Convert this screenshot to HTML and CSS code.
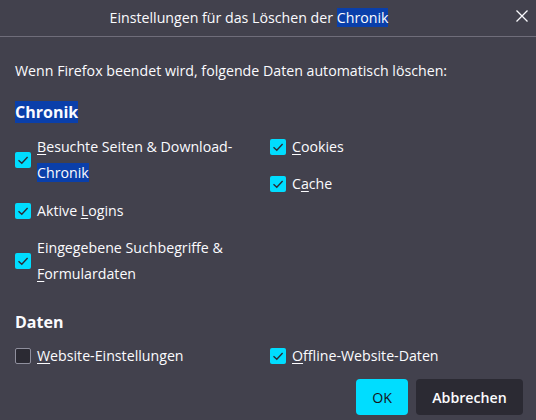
FILE: index.html
```html
<!DOCTYPE html>
<html lang="de">
<head>
<meta charset="utf-8">
<title>Einstellungen für das Löschen der Chronik</title>
<link rel="stylesheet" href="styles.css">
</head>
<body>
<div class="dialog">
  <header class="titlebar">
    <div></div>
    <h1 class="title">Einstellungen für das Löschen der <span class="sel">Chronik</span></h1>
    <div class="close-wrap">
      <svg class="close" width="12" height="12" viewBox="0 0 12 12"><path d="M0.5 0.5 L11.5 11.5 M11.5 0.5 L0.5 11.5" stroke="#fbfbfe" stroke-width="1.3" fill="none"/></svg>
    </div>
  </header>
  <main class="content">
    <p class="desc">Wenn Firefox beendet wird, folgende Daten automatisch löschen:</p>
    <h2 class="section"><span class="sel">Chronik</span></h2>
    <div class="grid">
      <div class="col">
        <label class="item"><span class="box on"><svg width="16" height="16" viewBox="0 0 16 16"><path d="M3.5 8.2 L6.8 11.2 L12.6 5" stroke="#2b2a33" stroke-width="1.4" fill="none"/></svg></span><span class="text"><u>B</u>esuchte Seiten &amp; Download-<span class="sel">Chronik</span></span></label>
        <label class="item"><span class="box on"><svg width="16" height="16" viewBox="0 0 16 16"><path d="M3.5 8.2 L6.8 11.2 L12.6 5" stroke="#2b2a33" stroke-width="1.4" fill="none"/></svg></span><span class="text">Aktive <u>L</u>ogins</span></label>
        <label class="item"><span class="box on"><svg width="16" height="16" viewBox="0 0 16 16"><path d="M3.5 8.2 L6.8 11.2 L12.6 5" stroke="#2b2a33" stroke-width="1.4" fill="none"/></svg></span><span class="text">Eingegebene Suchbegriffe &amp; <u>F</u>ormulardaten</span></label>
      </div>
      <div class="col">
        <label class="item"><span class="box on"><svg width="16" height="16" viewBox="0 0 16 16"><path d="M3.5 8.2 L6.8 11.2 L12.6 5" stroke="#2b2a33" stroke-width="1.4" fill="none"/></svg></span><span class="text"><u>C</u>ookies</span></label>
        <label class="item"><span class="box on"><svg width="16" height="16" viewBox="0 0 16 16"><path d="M3.5 8.2 L6.8 11.2 L12.6 5" stroke="#2b2a33" stroke-width="1.4" fill="none"/></svg></span><span class="text">C<u>a</u>che</span></label>
      </div>
    </div>
    <h2 class="section section-data">Daten</h2>
    <div class="grid">
      <div class="col">
        <label class="item"><span class="box off"></span><span class="text"><u>W</u>ebsite-Einstellungen</span></label>
      </div>
      <div class="col">
        <label class="item"><span class="box on"><svg width="16" height="16" viewBox="0 0 16 16"><path d="M3.5 8.2 L6.8 11.2 L12.6 5" stroke="#2b2a33" stroke-width="1.4" fill="none"/></svg></span><span class="text"><u>O</u>ffline-Website-Daten</span></label>
      </div>
    </div>
    <div class="buttons">
      <button class="btn primary">OK</button>
      <button class="btn secondary">Abbrechen</button>
    </div>
  </main>
</div>
</body>
</html>
```
FILE: styles.css
```css
html, body {
  margin: 0;
  padding: 0;
  background: #42414d;
}
body {
  font-family: "Open Sans", "Noto Sans", sans-serif;
  font-size: 14.2px;
  color: #fbfbfe;
  width: 536px;
  height: 420px;
  overflow: hidden;
}
.dialog {
  display: flex;
  flex-direction: column;
  height: 420px;
}
.titlebar {
  height: 36px;
  display: grid;
  grid-template-columns: 1fr auto 1fr;
  align-items: center;
  border-bottom: 1px solid #6f6d7a;
}
.title {
  margin: 0 38px 0 0;
  font-size: 14.2px;
  font-weight: 400;
  line-height: 20px;
}
.sel {
  background: #0a3faa;
}
.close-wrap {
  display: flex;
  justify-content: flex-end;
  padding-right: 8px;
  align-items: center;
  height: 36px;
  padding-bottom: 4px;
  box-sizing: border-box;
}
.content {
  padding: 0 13px 0 15px;
  display: flex;
  flex-direction: column;
}
.desc {
  margin: 21px 0 0;
  line-height: 26px;
}
.section {
  margin: 15px 0 0;
  font-size: 16px;
  font-weight: 700;
  line-height: 26px;
}
.section-data {
  margin-top: 22px;
}
.grid {
  display: grid;
  grid-template-columns: 255px 1fr;
  margin-top: 9px;
}
.section-data + .grid {
  margin-top: 8px;
}
.col {
  display: flex;
  flex-direction: column;
  gap: 11px;
}
.col:first-child {
  gap: 11.5px;
}
.item {
  display: flex;
  align-items: center;
  gap: 6px;
  line-height: 26px;
  padding-right: 18px;
}
.box {
  flex: none;
  width: 16px;
  height: 16px;
  border-radius: 2px;
  box-sizing: border-box;
  display: block;
}
.box svg {
  display: block;
}
.box.on {
  background: #00ddff;
}
.box.off {
  background: #2b2a33;
  border: 1px solid #8f8f9d;
}
.text u {
  text-decoration-thickness: 1px;
  text-underline-offset: 2px;
}
.buttons {
  display: flex;
  justify-content: flex-end;
  gap: 8px;
  margin-top: 10px;
}
.btn {
  height: 36px;
  border: none;
  border-radius: 4px;
  font-family: inherit;
  font-size: 14.2px;
  padding: 0 15px;
}
.primary {
  background: #00ddff;
  color: #15141a;
  width: 52px;
}
.secondary {
  background: #2b2a33;
  color: #fbfbfe;
  font-weight: 600;
  width: 107px;
}
```
